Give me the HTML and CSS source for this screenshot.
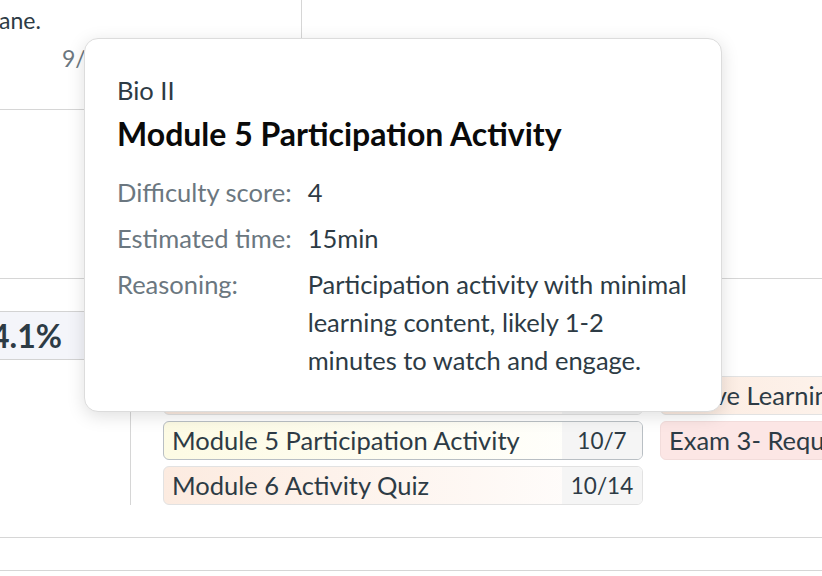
FILE: index.html
```html
<!DOCTYPE html>
<html lang="en">
<head>
<meta charset="utf-8">
<title>Planner</title>
<link rel="stylesheet" href="styles.css">
</head>
<body>
<main class="planner">
  <section class="top-row">
    <div class="top-cell">
      <p class="desc">ane.</p>
      <p class="date">9/30</p>
    </div>
  </section>
  <section class="mid-row"></section>
  <section class="week-row">
    <div class="stat-col">
      <div class="stat">94.1%</div>
    </div>
    <div class="items">
      <div class="item-col">
        <div class="badge b-peach"><span class="name">Module 4 Activity Quiz</span><span class="due">10/1</span></div>
        <div class="badge b-yellow"><span class="name">Chapter 9 Reading</span><span class="due">10/3</span></div>
        <div class="badge b-peach"><span class="name">Lab 5 Report</span><span class="due">10/5</span></div>
        <div class="badge b-yellow active"><span class="name">Module 5 Participation Activity</span><span class="due">10/7</span></div>
        <div class="badge b-peach"><span class="name">Module 6 Activity Quiz</span><span class="due">10/14</span></div>
      </div>
      <div class="item-col offset">
        <div class="badge b-peach"><span class="name">Active Learning Assignment</span><span class="due">10/6</span></div>
        <div class="badge b-pink"><span class="name">Exam 3- Required Reading</span><span class="due">10/9</span></div>
      </div>
    </div>
  </section>
  <section class="foot-row"></section>
</main>

<div class="tooltip">
  <p class="course">Bio II</p>
  <h2 class="title">Module 5 Participation Activity</h2>
  <dl class="facts">
    <dt>Difficulty score:</dt>
    <dd>4</dd>
    <dt>Estimated time:</dt>
    <dd>15min</dd>
    <dt>Reasoning:</dt>
    <dd>Participation activity with minimal learning content, likely 1-2 minutes to watch and engage.</dd>
  </dl>
</div>
</body>
</html>
```

FILE: styles.css
```css
* { box-sizing: border-box; }

html, body {
  margin: 0;
  padding: 0;
  background: #ffffff;
}

body {
  position: relative;
  width: 822px;
  height: 576px;
  overflow: hidden;
  font-family: Lato, "Liberation Sans", sans-serif;
  font-size: 23px;
  color: #2d3b45;
}

p, h2, dl, dd, dt { margin: 0; }

.planner {
  display: flex;
  flex-direction: column;
}

/* top row */
.top-row {
  height: 110px;
}

.top-cell {
  width: 302px;
  height: 110px;
  border-right: 1px solid #d6d6d6;
  border-bottom: 1px solid #d6d6d6;
  padding-top: 1px;
}

.desc {
  line-height: 38px;
  margin-left: -1px;
}

.date {
  line-height: 38px;
  margin-left: 62px;
  color: #6b7780;
}

/* middle row */
.mid-row {
  height: 169px;
  border-bottom: 1px solid #d6d6d6;
}

/* week row */
.week-row {
  display: flex;
}

.stat-col {
  width: 130px;
  flex: none;
  padding-top: 32px;
}

.stat {
  height: 49px;
  border-top: 1px solid #d3d3d3;
  border-bottom: 1px solid #d3d3d3;
  background: #f4f5fa;
  display: flex;
  align-items: center;
  justify-content: flex-end;
  padding-right: 68px;
  font-size: 32px;
  font-weight: 700;
  white-space: nowrap;
}

.items {
  flex: none;
  width: 692px;
  border-left: 1px solid #d6d6d6;
  padding: 7px 0 0 32px;
  display: flex;
  gap: 17px;
}

.item-col {
  flex: none;
  width: 480px;
  display: flex;
  flex-direction: column;
  gap: 6px;
}

.item-col.offset {
  padding-top: 90px;
}

.badge {
  height: 39px;
  display: flex;
  border: 1px solid #e2e2e2;
  border-radius: 6px;
  overflow: hidden;
}

.badge.active {
  border-color: #b9bfc4;
}

.b-yellow { background: linear-gradient(to right, #fdfbe4, #ffffff); }
.b-peach { background: linear-gradient(to right, #fcebe0, #ffffff); }
.b-pink { background: #fce6e5; border-color: #f2dcdb; }

.name {
  flex: 1;
  min-width: 0;
  padding: 0 8px;
  font-size: 25.5px;
  line-height: 37px;
  white-space: nowrap;
  overflow: hidden;
}

.due {
  flex: none;
  width: 80px;
  text-align: center;
  line-height: 37px;
  background: #f5f5f5;
  font-size: 22.5px;
}

/* footer lines */
.foot-row {
  margin-top: 32px;
  height: 34px;
  border-top: 1px solid #d6d6d6;
  border-bottom: 1px solid #d6d6d6;
}

/* tooltip */
.tooltip {
  position: absolute;
  left: 84px;
  top: 38px;
  width: 638px;
  padding: 32px 32px 32px;
  background: #ffffff;
  border: 1px solid #dcdcdc;
  border-radius: 14px;
  box-shadow: 0 4px 18px rgba(0, 0, 0, 0.13);
  font-size: 25.5px;
}

.course {
  line-height: 38px;
  color: #2d3b45;
}

.title {
  margin-top: 7px;
  font-size: 32px;
  line-height: 36px;
  font-weight: 700;
  color: #0a0a0a;
}

.facts {
  margin-top: 21px;
  display: grid;
  grid-template-columns: auto 1fr;
  column-gap: 16px;
  row-gap: 8px;
  line-height: 38px;
}

.facts dt {
  color: #6b7780;
  white-space: nowrap;
}

.facts dd {
  color: #2d3b45;
}
```
